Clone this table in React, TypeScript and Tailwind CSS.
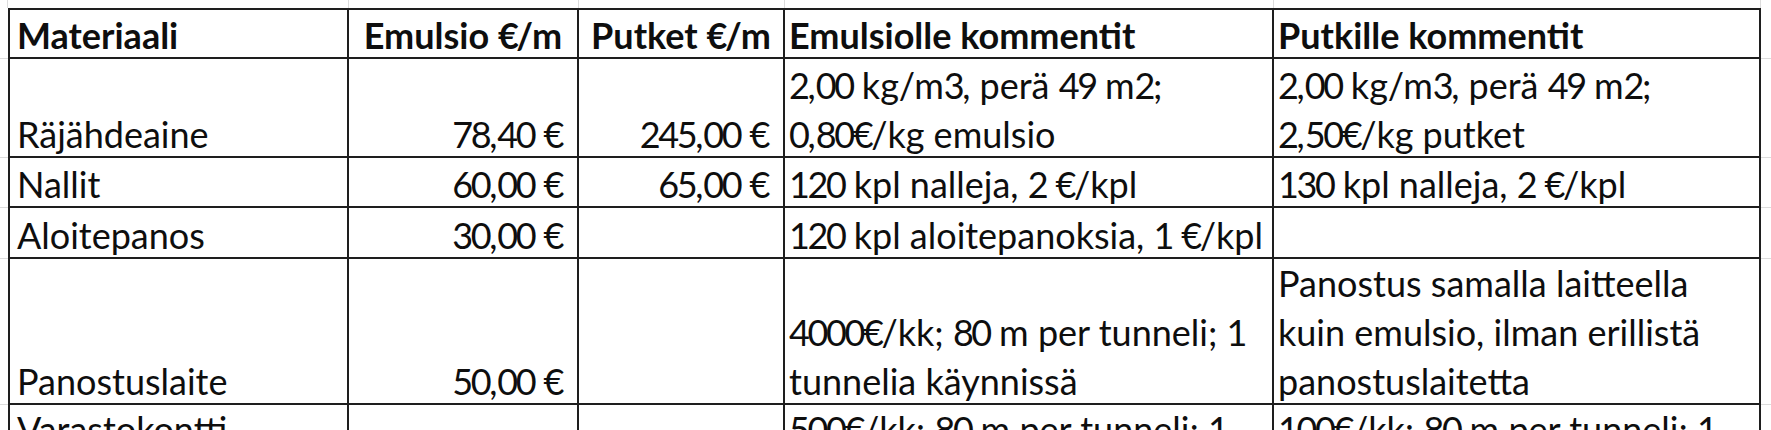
import React from "react";

type Align = "left" | "right" | "center";

const font = { fontFamily: "Lato, 'Open Sans', sans-serif" };

function Txt({ text }: { text: string }) {
  const parts = text.split(/([0-9€]+)/);
  return (
    <>
      {parts.map((p, i) =>
        /^[0-9€]+$/.test(p) ? (
          <span key={i} className="tracking-[-2.4px]">
            {p}
          </span>
        ) : (
          <React.Fragment key={i}>{p}</React.Fragment>
        )
      )}
    </>
  );
}

function Cell({
  lines,
  align = "left",
  bold = false,
  top = false,
  first = false,
  header = false,
}: {
  lines: string[];
  align?: Align;
  bold?: boolean;
  top?: boolean;
  first?: boolean;
  header?: boolean;
}) {
  const alignCls =
    align === "right"
      ? "items-end pr-[15px]"
      : align === "center"
      ? "items-center"
      : first
      ? "items-start pl-[7px]"
      : "items-start pl-[4px]";
  return (
    <div
      className={
        "flex flex-col overflow-hidden border-r-2 border-b-2 border-[#1e1e1e] " +
        (top ? "justify-start " : "justify-end ") +
        (first ? "border-l-2 " : "") +
        (header ? "border-t-2 " : "") +
        alignCls
      }
    >
      <div className={"flex flex-col " + (top ? "" : "-mb-[3px] ") + (align === "right" ? "items-end" : align === "center" ? "items-center" : "items-start")}>
        {lines.map((l, i) => (
          <div
            key={i}
            className={
              "whitespace-nowrap text-[36px] leading-[49px] text-[#0e0e0e] " +
              (bold ? "font-bold" : "font-normal")
            }
          >
            <Txt text={l} />
          </div>
        ))}
      </div>
    </div>
  );
}

function GutterTop() {
  return <div className="border-r border-[#dcdcdc]" />;
}
function GutterSide() {
  return <div className="border-b border-[#dcdcdc]" />;
}

export default function App() {
  return (
    <div className="w-[1771px] h-[430px] overflow-hidden bg-white" style={font}>
      <div className="grid grid-cols-[8px_341px_230px_206px_489px_487px_1fr] grid-rows-[8px_51px_99px_50px_51px_146px_120px]">
        {/* top gutter */}
        <div className="border-r border-[#dcdcdc]" />
        <GutterTop />
        <GutterTop />
        <GutterTop />
        <GutterTop />
        <GutterTop />
        <div />

        {/* header */}
        <GutterSide />
        <Cell lines={["Materiaali"]} bold first header />
        <Cell lines={["Emulsio €/m"]} bold align="center" header />
        <Cell lines={["Putket €/m"]} bold align="center" header />
        <Cell lines={["Emulsiolle kommentit"]} bold header />
        <Cell lines={["Putkille kommentit"]} bold header />
        <GutterSide />

        {/* row 1 */}
        <GutterSide />
        <Cell lines={["Räjähdeaine"]} first />
        <Cell lines={["78,40 €"]} align="right" />
        <Cell lines={["245,00 €"]} align="right" />
        <Cell lines={["2,00 kg/m3, perä 49 m2;", "0,80€/kg emulsio"]} />
        <Cell lines={["2,00 kg/m3, perä 49 m2;", "2,50€/kg putket"]} />
        <GutterSide />

        {/* row 2 */}
        <GutterSide />
        <Cell lines={["Nallit"]} first />
        <Cell lines={["60,00 €"]} align="right" />
        <Cell lines={["65,00 €"]} align="right" />
        <Cell lines={["120 kpl nalleja, 2 €/kpl"]} />
        <Cell lines={["130 kpl nalleja, 2 €/kpl"]} />
        <GutterSide />

        {/* row 3 */}
        <GutterSide />
        <Cell lines={["Aloitepanos"]} first />
        <Cell lines={["30,00 €"]} align="right" />
        <Cell lines={[""]} align="right" />
        <Cell lines={["120 kpl aloitepanoksia, 1 €/kpl"]} />
        <Cell lines={[""]} />
        <GutterSide />

        {/* row 4 */}
        <GutterSide />
        <Cell lines={["Panostuslaite"]} first />
        <Cell lines={["50,00 €"]} align="right" />
        <Cell lines={[""]} align="right" />
        <Cell lines={["4000€/kk; 80 m per tunneli; 1", "tunnelia käynnissä"]} />
        <Cell
          lines={[
            "Panostus samalla laitteella",
            "kuin emulsio, ilman erillistä",
            "panostuslaitetta",
          ]}
        />
        <GutterSide />

        {/* row 5 (cut off) */}
        <div />
        <Cell lines={["Varastokontti"]} first top />
        <Cell lines={[""]} top />
        <Cell lines={[""]} top />
        <Cell lines={["500€/kk; 80 m per tunneli; 1"]} top />
        <Cell lines={["100€/kk; 80 m per tunneli; 1"]} top />
        <div />
      </div>
    </div>
  );
}
